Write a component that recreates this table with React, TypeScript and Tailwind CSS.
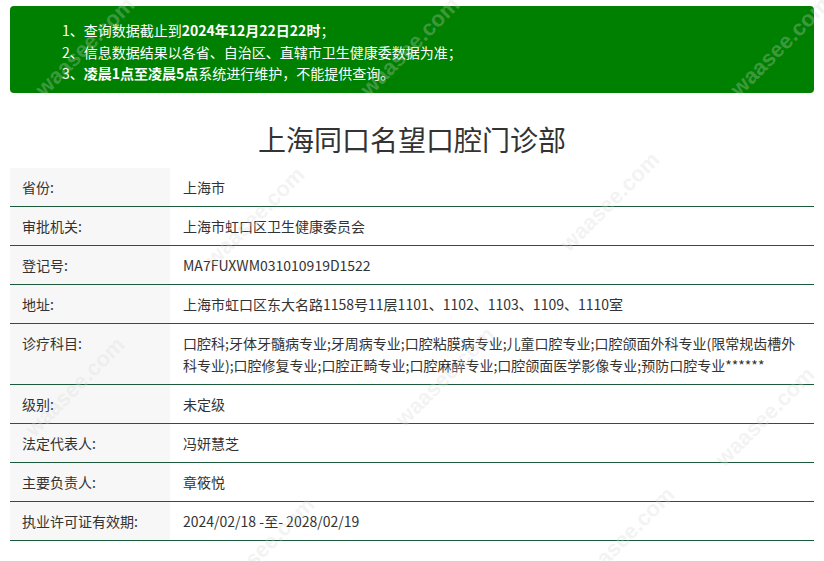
const rows: { label: string; value: string }[] = [
  { label: '省份:', value: '上海市' },
  { label: '审批机关:', value: '上海市虹口区卫生健康委员会' },
  { label: '登记号:', value: 'MA7FUXWM031010919D1522' },
  { label: '地址:', value: '上海市虹口区东大名路1158号11层1101、1102、1103、1109、1110室' },
  {
    label: '诊疗科目:',
    value:
      '口腔科;牙体牙髓病专业;牙周病专业;口腔粘膜病专业;儿童口腔专业;口腔颌面外科专业(限常规齿槽外科专业);口腔修复专业;口腔正畸专业;口腔麻醉专业;口腔颌面医学影像专业;预防口腔专业******',
  },
  { label: '级别:', value: '未定级' },
  { label: '法定代表人:', value: '冯妍慧芝' },
  { label: '主要负责人:', value: '章筱悦' },
  { label: '执业许可证有效期:', value: '2024/02/18 -至- 2028/02/19' },
];

// faint site watermark, tiled over the page
const marks: [number, number][] = [
  [20, 30],
  [345, 30],
  [715, 30],
  [190, 200],
  [545, 185],
  [10, 370],
  [380, 360],
  [700, 400],
  [200, 530],
  [560, 520],
];

export default function App() {
  return (
    <div
      className="relative min-h-[561px] w-[824px] overflow-hidden bg-white px-[10px] text-[#333]"
      style={{ fontFamily: '"Noto Sans CJK SC", "Noto Sans", sans-serif' }}
    >
      <div className="mt-[6px] rounded-[4px] bg-[#008000] pt-[14px] pb-[8px] pl-[52px] text-[14px] leading-[21.5px] text-white">
        <p>
          1、查询数据截止到<b>2024年12月22日22时</b>；
        </p>
        <p>2、信息数据结果以各省、自治区、直辖市卫生健康委数据为准；</p>
        <p>
          3、<b>凌晨1点至凌晨5点</b>系统进行维护，不能提供查询。
        </p>
      </div>

      <h1 className="mt-[26px] mb-[9px] text-center text-[28px] leading-[40px] font-normal text-[#333]">
        上海同口名望口腔门诊部
      </h1>

      <div className="text-[14px] leading-[22px]">
        {rows.map((r) => (
          <div key={r.label} className="flex border-b border-[#1b5a3a]">
            <div className="w-[160px] shrink-0 bg-[#f7f7f7] py-[8px] pl-[12px]">{r.label}</div>
            <div className="flex-1 py-[8px] pr-[16px] pl-[13px]">{r.value}</div>
          </div>
        ))}
      </div>

      {marks.map(([x, y], i) => (
        <div
          key={i}
          className="pointer-events-none absolute -rotate-45 text-[22px] font-semibold whitespace-nowrap text-[rgba(215,215,215,0.3)]"
          style={{ left: x, top: y, fontFamily: 'Arial, "Liberation Sans", sans-serif' }}
        >
          waasee.com
        </div>
      ))}
    </div>
  );
}
